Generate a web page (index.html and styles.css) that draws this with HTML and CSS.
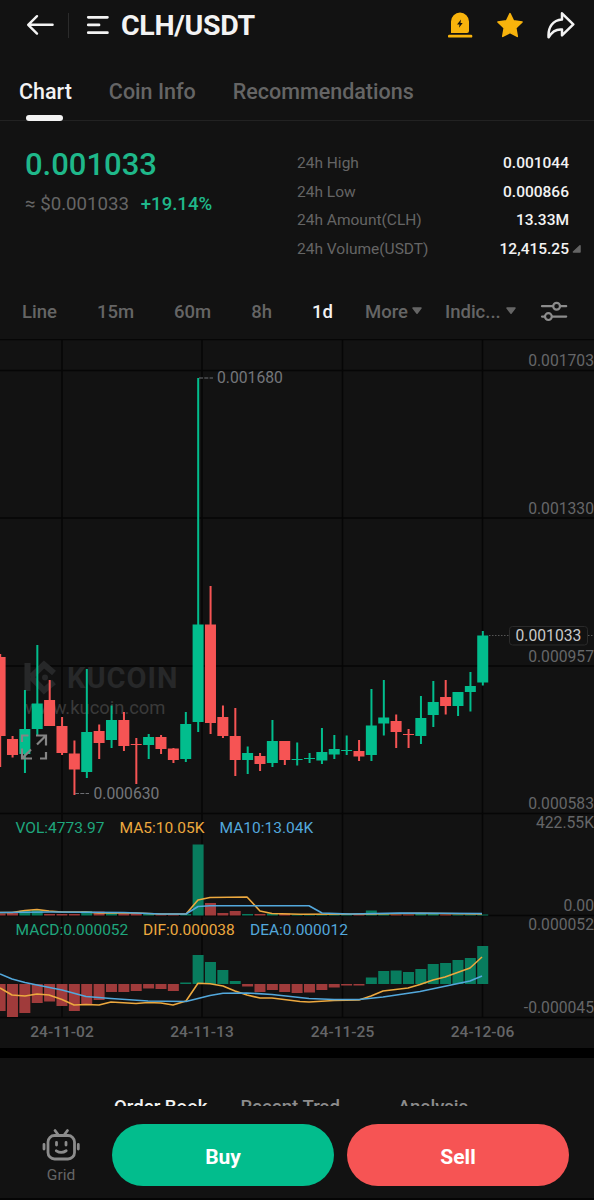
FILE: index.html
```html
<!DOCTYPE html>
<html lang="en">
<head>
    <meta charset="UTF-8">
    <meta name="viewport" content="width=device-width, initial-scale=1.0">
    <title>CLH/USDT</title>
    <link rel="stylesheet" href="styles.css">
</head>
<body>

<div class="app">
    <header class="top-bar">
        <svg class="back-icon" width="28" height="22" viewBox="0 0 28 22"><path d="M11 2.2 2.2 10.8 11 19.6M2.4 10.8H26.6"/></svg>
        <span class="divider"></span>
        <svg class="list-icon" width="24" height="22" viewBox="0 0 24 22"><path d="M2.3 3.3H21.4M2.3 10.9H13M2.3 18.7H21.4"/></svg>
        <h1>CLH/USDT</h1>
        <div class="actions">
            <svg width="26" height="28" viewBox="0 0 26 28">
                <path class="gold" d="M4 22V10.5a9 9 0 0 1 18 0V20a2 2 0 0 1-2 2Z"/>
                <rect class="gold" x="1" y="23.8" width="24.3" height="2.8" rx="1.2"/>
                <path class="bolt" d="m14 8.4-4 5.2h2.5L12 16.8l3.7-4.9h-2.2Z"/>
            </svg>
            <svg width="30" height="28" viewBox="0 0 30 28"><path class="gold star" d="m15 2.6 3.5 7.2 8.6 1.2-6.3 5.9 1.5 8.5-7.3-3.8-7.3 3.8 1.5-8.5-6.3-5.9 8.6-1.2Z"/></svg>
            <svg width="30" height="28" viewBox="0 0 30 28"><path class="share" d="M16 2.3 27.3 13.3 16 24.3V18.5C9.5 17.8 6 20.6 2.6 26.3 1.8 16 7 8.9 16 8.4Z"/></svg>
        </div>
    </header>

    <nav class="tabs">
        <a class="active">Chart</a>
        <a>Coin Info</a>
        <a>Recommendations</a>
    </nav>

    <section class="summary">
        <div class="price">
            <div class="last">0.001033</div>
            <div class="fiat">≈ $0.001033 <span class="change">+19.14%</span></div>
        </div>
        <div class="stats">
            <div class="stat"><span>24h High</span><b>0.001044</b></div>
            <div class="stat"><span>24h Low</span><b>0.000866</b></div>
            <div class="stat"><span>24h Amount(CLH)</span><b>13.33M</b></div>
            <div class="stat"><span>24h Volume(USDT)</span><b>12,415.25</b>
                <svg class="corner" width="10" height="10" viewBox="0 0 10 10"><path d="M8 1.8V8H1.4Z"/></svg>
            </div>
        </div>
    </section>

    <nav class="intervals">
        <a>Line</a>
        <a>15m</a>
        <a>60m</a>
        <a>8h</a>
        <a class="active">1d</a>
        <a class="more">More<svg class="caret" width="12" height="10" viewBox="0 0 12 10"><path d="M2 2H10L6 7.2Z"/></svg></a>
        <a class="indic">Indic...<svg class="caret" width="12" height="10" viewBox="0 0 12 10"><path d="M2 2H10L6 7.2Z"/></svg></a>
        <svg class="settings" width="28" height="22" viewBox="0 0 28 22">
            <path d="M2 6.2H13M20.4 6.2H26.2M2 16.6H4.6M12 16.6H26.2"/>
            <circle cx="16.6" cy="6.2" r="3.4"/>
            <circle cx="8.4" cy="16.6" r="3.4"/>
        </svg>
    </nav>

    <svg class="chart" width="594" height="709" viewBox="0 339 594 709">
        <g id="grid" class="grid"></g>
        <g class="watermark">
            <path d="M27.500 663V691M31 677 44 664.500 54 673M31 677 44 690.500 54 682"/>
            <circle cx="45" cy="677.5" r="3"/>
            <text class="brand" x="67" y="688">KUCOIN</text>
            <text class="site" x="25" y="714">www.kucoin.com</text>
        </g>
        <g id="bars"></g>
        <g id="candles"></g>
        <g id="lines"></g>

        <path class="expand" d="M22 742V735.5H28.5M36 735.5H46V745.5M45.5 736 37 744.5M46 752V758.5H40M32 758.5H22V748.5M22.5 758 31 749.5"/>

        <path class="dash" d="M199 378H213M75 793.5H89"/>
        <text class="mark" x="217" y="383">0.001680</text>
        <text class="mark" x="93.5" y="799">0.000630</text>

        <g class="axis">
            <text x="594" y="366">0.001703</text>
            <text x="594" y="514">0.001330</text>
            <text x="594" y="662">0.000957</text>
            <text x="594" y="809">0.000583</text>
            <text x="594" y="828">422.55K</text>
            <text x="594" y="911">0.00</text>
            <text x="594" y="930">0.000052</text>
            <text x="594" y="1012.5">-0.000045</text>
        </g>

        <path class="last-line" d="M489 635.5H509M588 635.5H594"/>
        <rect class="last-box" x="509.5" y="626.5" width="78" height="18.5" rx="3"/>
        <text class="last-text" x="515.5" y="640.5">0.001033</text>

        <g class="legend">
            <text class="c-green" x="15.5" y="833">VOL:4773.97</text>
            <text class="c-orange" x="119.5" y="833">MA5:10.05K</text>
            <text class="c-blue" x="219.5" y="833">MA10:13.04K</text>
            <text class="c-green" x="15.5" y="935">MACD:0.000052</text>
            <text class="c-orange" x="143" y="935">DIF:0.000038</text>
            <text class="c-blue" x="250" y="935">DEA:0.000012</text>
        </g>

        <g class="dates">
            <text x="62" y="1036.5">24-11-02</text>
            <text x="202" y="1036.5">24-11-13</text>
            <text x="342.5" y="1036.5">24-11-25</text>
            <text x="482.5" y="1036.5">24-12-06</text>
        </g>
    </svg>

    <section class="book">
        <div class="book-tabs">
            <a class="active">Order Book</a>
            <a>Recent Trad</a>
            <a>Analysis</a>
        </div>
    </section>

    <footer class="trade-bar">
        <div class="grid-bot">
            <svg width="40" height="34" viewBox="0 0 40 34">
                <rect x="7" y="7.5" width="26.5" height="23.5" rx="6.5"/>
                <path d="M14 2.5 17 6.5M26.5 2.5 23.5 6.5M3 16.5V21M37.3 16.5V21M15.5 14.5V17M25 14.5V17M15.3 22.8Q20.2 26 25.2 22.8"/>
            </svg>
            <span>Grid</span>
        </div>
        <button class="buy">Buy</button>
        <button class="sell">Sell</button>
    </footer>
</div>

<script>
    const STEP = 12.375;

    // direction, high, body top, body bottom, low
    const candles = [
        ['r', 654, 657, 736, 767], ['r', 736, 739, 755, 757.5], ['g', 690, 729, 754, 773], ['g', 645, 703.5, 729, 736],
        ['r', 680, 700, 726, 726], ['r', 717, 726, 753, 755], ['r', 740.5, 753.5, 769.5, 795], ['g', 669, 732, 772, 778],
        ['r', 724.5, 731, 743, 759], ['g', 705.5, 720, 740, 748], ['r', 712, 720, 746, 751], ['r', 738, 744, 745, 784],
        ['g', 734, 737, 745, 759], ['r', 735, 737, 749, 754], ['r', 748, 748.5, 760, 763], ['g', 712, 724, 759, 762],
        ['g', 378, 624.5, 722, 732], ['r', 586, 624.5, 723, 734], ['r', 705.5, 717, 736, 738], ['r', 708, 736, 760, 776],
        ['g', 746.5, 753, 760, 774], ['r', 753, 756, 764, 771], ['g', 720, 741, 763, 767], ['r', 741, 741, 760, 765],
        ['g', 742.5, 759, 760, 765.5], ['g', 753, 758, 759, 763], ['g', 728, 752, 760.5, 764], ['g', 735, 749, 754.5, 759],
        ['g', 735.5, 750, 751, 755], ['r', 740, 751, 756.5, 761], ['g', 689, 725.5, 755, 761], ['g', 680, 717.5, 723.5, 735.5],
        ['r', 714.5, 721, 732, 748], ['r', 729, 734, 735, 748], ['g', 696, 718, 736, 744], ['g', 681, 702, 715, 727],
        ['r', 680, 697, 706, 714.5], ['g', 692, 692, 706, 716], ['g', 672, 686, 692, 711.5], ['g', 631, 635.5, 682.5, 685.5]
    ];
    const volume = [2, 2.5, 5, 5.5, 1.5, 1.5, 1.5, 4.5, 4, 2.5, 2, 2, 2, 1, 1, 1.5, 71, 12.5, 2.5, 4.5,
        1.5, 1.5, 2, 2, 1, 1, 1, 1, 1, 1, 5, 1.5, 1, 1, 1.5, 1.5, 1, 1, 1, 1];
    // below zero is negative
    const macd = [-27, -33, -29, -19, -17.5, -22, -27, -21, -16, -8, -8, -7, -4.5, -5, -7, 1.5, 29, 22, 14, 3,
        -2.5, -8, -6, -8, -9, -8.5, -6, -3.5, -1.5, -1.5, 6.5, 13, 13.5, 12, 15, 20, 21, 24, 26, 38];

    const lines = {
        'c-orange': [
            '0,912.5 12,912.5 25,910.5 37,909.5 49,911 62,912 86,912 99,913 136,913 160,914 186,914 198,900 210,897.5 247,897 260,911 272,913.5 300,914.3 371,914 420,913.3 482,914',
            '0,988 12,995 25,996 37,994 49,995 62,999.5 74,1005 86,1004.5 99,1005 111,1002 136,1003.5 148,1002.5 161,1003 173,1005 186,1001 198,983.3 210,983.7 223,986 235,991 247,995 260,998 272,998 300,1001.5 309,1002 334,1000.5 359,1000 371,996 383,991 408,988 420,984.5 433,980 445,977 470,968 482,957'
        ],
        'c-blue': [
            '0,912.5 49,912 124,912.5 161,914 186,914 198,906.5 210,905.7 309,905.7 322,913 350,914 400,913 482,913.5',
            '0,974 12,979 25,982.5 37,985 62,990 86,996.5 111,998.5 148,1001 186,1001.5 198,998.5 210,995.5 223,993.2 247,993 272,994.5 309,998.5 334,999.5 359,999.5 383,997 420,991.5 470,981 482,976'
        ]
    };

    const rect = (cls, x, y, w, h) => `<rect class="${cls}" x="${x}" y="${y}" width="${w}" height="${h}"/>`;

    let grid = '', bars = '', sticks = '', curves = '';
    [62, 202, 342.5, 482.5].forEach(x => grid += `<path d="M${x} 340V1017.5"/>`);
    [339.5, 370.5, 518, 666, 813.5, 915.5, 1017.5].forEach(y => grid += `<path d="M0 ${y}H594"/>`);

    candles.forEach(([dir, high, top, bottom, low], i) => {
        const x = i * STEP;
        const side = dir === 'g' ? 'up' : 'down';
        sticks += rect(side, x - 0.8, high, 2, low - high);
        sticks += rect(side, x - 5.4, top, 11, bottom - top);
        bars += rect('vol-' + side, x - 5.4, 915.5 - volume[i], 11, volume[i]);
        const m = macd[i];
        bars += rect(m > 0 ? 'vol-up' : 'vol-down', x - 5.4, m > 0 ? 984 - m : 984, 11, Math.abs(m));
    });

    for (const cls in lines) {
        lines[cls].forEach(points => curves += `<polyline class="line ${cls}" points="${points}"/>`);
    }

    document.getElementById('grid').innerHTML = grid;
    document.getElementById('bars').innerHTML = bars;
    document.getElementById('candles').innerHTML = sticks;
    document.getElementById('lines').innerHTML = curves;
</script>

</body>
</html>
```

FILE: styles.css
```css
body {
    margin: 0;
    background: #121212;
    color: #f3f3f3;
    font-family: Roboto, sans-serif;
}
.app {
    width: 594px;
    height: 1200px;
    display: flex;
    flex-direction: column;
    overflow: hidden;
}
.app > * {
    flex-shrink: 0;
}
svg {
    display: block;
    flex: none;
}

/* header */
.top-bar {
    height: 50px;
    padding: 0 18px 0 26px;
    display: flex;
    align-items: center;
}
.back-icon path,
.list-icon path {
    fill: none;
    stroke: #f3f3f3;
    stroke-width: 2.4;
    stroke-linecap: round;
    stroke-linejoin: round;
}
.list-icon path {
    stroke-width: 2.8;
}
.divider {
    width: 1px;
    height: 25px;
    margin: 0 17px 0 14px;
    background: #2b2b2b;
}
h1 {
    margin: 1px 0 0 11px;
    font-size: 28.5px;
    font-weight: 700;
    letter-spacing: -0.3px;
}
.actions {
    margin-left: auto;
    display: flex;
    gap: 22px;
}
.actions svg:last-child {
    margin-left: -1px;
}
.gold {
    fill: #f8b30c;
}
.bolt {
    fill: #121212;
}
.star {
    stroke: #f8b30c;
    stroke-width: 1.5;
    stroke-linejoin: round;
}
.share {
    fill: none;
    stroke: #f3f3f3;
    stroke-width: 2.5;
    stroke-linejoin: round;
}

/* tabs */
.tabs {
    height: 70px;
    padding-left: 19px;
    display: flex;
    gap: 37px;
    border-bottom: 1px solid #222;
    font-size: 21.5px;
    font-weight: 500;
    line-height: 83px;
    color: #656565;
}
.tabs a {
    position: relative;
}
.tabs .active {
    color: #f3f3f3;
}
.tabs .active::after {
    content: "";
    position: absolute;
    left: 7px;
    top: 65px;
    width: 37px;
    height: 6px;
    border-radius: 3px;
    background: #f3f3f3;
}

/* price and 24h stats */
.summary {
    height: 163px;
    display: flex;
    justify-content: space-between;
}
.price {
    padding: 24px 0 0 25px;
}
.last {
    font-size: 31px;
    font-weight: 500;
    line-height: 40px;
    color: #1fb88a;
}
.fiat {
    margin-top: 7px;
    font-size: 18.7px;
    line-height: 24px;
    color: #656565;
}
.change {
    margin-left: 7px;
    font-size: 18.6px;
    font-weight: 500;
    color: #1fb88a;
}
.stats {
    width: 272px;
    padding: 28px 25px 0 0;
}
.stat {
    position: relative;
    display: flex;
    justify-content: space-between;
    font-size: 15.5px;
    line-height: 28.6px;
    color: #656565;
}
.stat b {
    font-weight: 500;
    color: #f3f3f3;
}
.corner {
    position: absolute;
    right: -13px;
    top: 9px;
}
.corner path,
.caret path {
    fill: #656565;
    stroke: #656565;
    stroke-width: 1.5;
    stroke-linejoin: round;
}

/* intervals */
.intervals {
    height: 55px;
    padding: 0 26px 0 22px;
    display: flex;
    align-items: center;
    gap: 40px;
    font-size: 18.5px;
    font-weight: 500;
    color: #656565;
}
.intervals .active {
    color: #f3f3f3;
}
.intervals .more,
.intervals .indic {
    display: flex;
    align-items: center;
}
.more {
    margin-left: -8px;
}
.indic {
    margin-left: -18px;
}
.caret {
    margin: -2px 0 0 4px;
}
.more .caret {
    margin-left: 3px;
}
.settings {
    margin: -1px 0 0 -17px;
}
.settings path,
.settings circle {
    fill: none;
    stroke: #8c8c8c;
    stroke-width: 2.2;
    stroke-linecap: round;
}

/* chart */
.chart {
    font-size: 15px;
}
.grid path {
    fill: none;
    stroke: #060606;
    stroke-width: 1.5;
}
.watermark path {
    fill: none;
    stroke: #272829;
    stroke-width: 6;
}
.watermark circle {
    fill: #272829;
}
.brand {
    fill: #272829;
    font-size: 29px;
    font-weight: 700;
    letter-spacing: 1px;
}
.site {
    fill: #3a3a3a;
    font-size: 18.4px;
}
.up {
    fill: #02bd8d;
}
.down {
    fill: #f65454;
}
.vol-up {
    fill: #087c5e;
}
.vol-down {
    fill: #a03b3b;
}
.line {
    fill: none;
    stroke-width: 1.6;
    stroke-linejoin: round;
}
.line.c-orange {
    stroke: #eda93f;
}
.line.c-blue {
    stroke: #53a8dc;
}
.expand {
    fill: none;
    stroke: #858585;
    stroke-width: 2.2;
}
.dash {
    stroke: #6c6e72;
    stroke-width: 1.2;
    stroke-dasharray: 4 1.3;
}
.mark {
    fill: #74767a;
    font-size: 15.7px;
}
.axis text {
    fill: #656668;
    font-size: 15.7px;
    text-anchor: end;
}
.last-line {
    stroke: #555;
    stroke-dasharray: 1.5 1.5;
}
.last-box {
    fill: #121212;
    stroke: #2a2a2a;
}
.last-text {
    fill: #c8c8c8;
    font-size: 15.7px;
}
.legend text {
    font-size: 15.5px;
}
.legend .c-green {
    fill: #1fa67d;
}
.legend .c-orange {
    fill: #eda93f;
}
.legend .c-blue {
    fill: #53a8dc;
}
.dates text {
    fill: #656668;
    font-size: 15.5px;
    font-weight: 500;
    text-anchor: middle;
}

/* order book, cut off by the trade bar */
.book {
    height: 48px;
    border-top: 10px solid #000;
    overflow: hidden;
}
.book-tabs {
    padding: 37px 0 0 114px;
    display: flex;
    font-size: 18.6px;
    font-weight: 500;
    line-height: 24px;
    color: #8c8c8c;
}
.book-tabs .active {
    margin-right: 33px;
    color: #f3f3f3;
}
.book-tabs a:last-child {
    margin-left: 58px;
}

/* bottom bar */
.trade-bar {
    height: 74px;
    padding: 18px 25px 0 41px;
    display: flex;
    border-bottom: 2px solid #050505;
}
.grid-bot {
    width: 40px;
    margin-right: 31px;
    padding-top: 4px;
    display: flex;
    flex-direction: column;
    align-items: center;
    font-size: 15.5px;
    line-height: 26px;
    color: #656565;
}
.grid-bot rect,
.grid-bot path {
    fill: none;
    stroke: #8c8c8c;
    stroke-width: 2.8;
    stroke-linecap: round;
}
.trade-bar button {
    width: 222px;
    height: 62px;
    padding: 3px 0 0;
    border: none;
    border-radius: 31px;
    font-family: inherit;
    font-size: 21px;
    font-weight: 700;
    color: #fff;
    cursor: pointer;
}
.buy {
    margin-right: 13px;
    background: #02bd8d;
}
.trade-bar .sell {
    background: #f65454;
}
```
